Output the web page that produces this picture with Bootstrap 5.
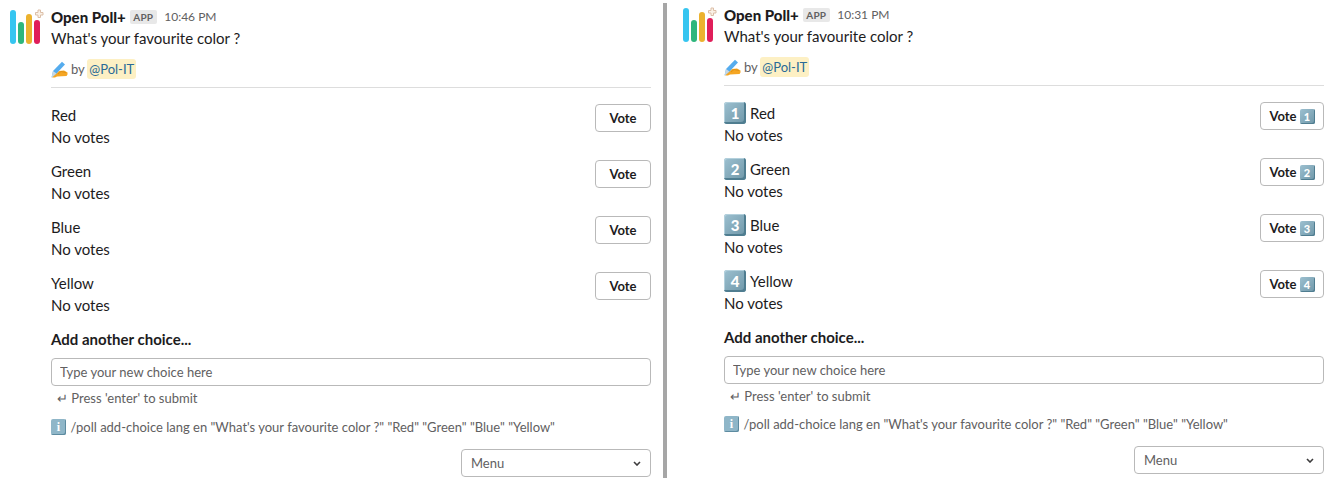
<!DOCTYPE html>
<html lang="en"><head><meta charset="utf-8"><title>Open Poll+</title>
<link href="https://cdn.jsdelivr.net/npm/bootstrap@5.3.0/dist/css/bootstrap.min.css" rel="stylesheet">
<style>
html,body{height:485px;overflow:hidden}
body{font-family:Lato,"Liberation Sans",sans-serif;color:#1d1c1d;font-size:15px;line-height:22px;background:#fff}
.pane{flex:none;display:flex;align-items:flex-start}
.pane-a{width:663px;padding:6px 12px 0 10px}
.pane-b{width:671px;padding:4px 14px 0 16px}
.rule{flex:none;width:4px;height:475px;margin-top:3px;background:#a6a6a6}
.logo{flex:none;width:34px;height:36px;margin-top:3px;margin-right:7px}
.body-col{width:600px}
.head{height:21px}
.who{font-weight:900;font-size:15px}
.tag{font-size:10px;font-weight:700;line-height:14px;height:14px;padding:0 3.5px;margin-left:4px;background:#e8e8e8;color:#616061;border-radius:2px;letter-spacing:.2px}
.when{font-size:12px;color:#616061;margin-left:7.5px}
.ctx{font-size:13px;line-height:18px;color:#616061;margin-top:10px;height:20px}
.pen{width:17px;height:17px;margin-right:3px}
.ment{background:#fdf0c4;color:#2a6a97;border-radius:3px;padding:1px 2px 1px 2.5px;margin-left:-1px}
.sep{height:1px;background:#dddddd;margin:8px 0 16px}
.opt{height:56px}
.lab{height:22px}
.key{display:inline-flex;align-items:center;justify-content:center;flex:none;width:22px;height:22px;border-radius:3px;background:linear-gradient(135deg,#9cc0d0,#6f97a8);box-shadow:inset -2px -2px 0 #4f7d90,inset 1px 1px 0 #b3d0dc;color:#fff;font-weight:900;font-size:15px;line-height:1;margin-right:4px}
.key-s{width:15px;height:15px;font-size:11px;margin:0 0 0 3px;border-radius:2px;box-shadow:inset -1px -1px 0 #4f7d90}
.votebtn{height:28px;padding:0 13.5px;font-size:13px;font-weight:700;line-height:26px;background:#fff;color:#1d1c1d;border:1px solid #b9b9b9;border-radius:4px}
.votebtn-b{padding:0 8.5px}
.addh{font-weight:700;font-size:15px;height:22px}
.fld{display:block;width:100%;height:28px;margin-top:8px;padding:0 8px;border:1px solid #b9b9b9;border-radius:4px;font-size:13px;color:#1d1c1d;font-family:inherit}
.fld::placeholder{color:#616061;opacity:1}
.hint{font-size:13px;line-height:18px;color:#616061;margin-top:3px;padding-left:6px}
.info{font-size:13px;line-height:18px;color:#616061;margin-top:11px}
.info-b{margin-top:10px}
.ikey{display:inline-flex;align-items:center;justify-content:center;flex:none;width:15px;height:16px;border-radius:2px;background:#8fb6c8;box-shadow:inset -1px -1px 0 #5d8ba0;color:#fff;font-weight:900;font-size:12px;margin-right:4.5px;font-family:"Liberation Serif",serif}
.menu-wrap{margin-top:13px}
.menubtn{width:190px;height:28px;padding:0 9px 0 9px;border:1px solid #b9b9b9;border-radius:4px;background:#fff;font-size:13px;color:#616061;line-height:26px}
.chev{width:8px;height:5px}
</style></head><body>
<svg width="0" height="0" class="position-absolute"><defs>
<symbol id="lg" viewBox="0 0 34 36"><rect x="0" y="1" width="6" height="34" rx="3" fill="#36c5f0"/><rect x="8" y="13" width="6" height="22" rx="3" fill="#2eb67d"/><rect x="16" y="5" width="6" height="30" rx="3" fill="#ecb22e"/><rect x="24" y="11" width="6" height="24" rx="3" fill="#e01e5a"/><path d="M28 1h2.500v2.500H33V6h-2.500v2.500H28V6h-2.500V3.500H28z" fill="#faf1e6" stroke="#dcbfa8" stroke-width="1"/></symbol>
<symbol id="pn" viewBox="0 0 17 17"><path d="M1 16.500h3l2-1 9.500-.5 1-1.500v-2l-3.500-2-5 .5-3 2.500z" fill="#f5a623"/><path d="M.5 16.500L2 10 11 .8l3 2.700-8.500 9z" fill="#55acee"/><path d="M.5 16.500L2 10l3.500 2.500z" fill="#c7d8e4"/><path d="M7 13l3-2.500 5 1" fill="none" stroke="#d98b12" stroke-width=".8"/></symbol>
</defs></svg>
<div class="d-flex">
<div class="pane pane-a">
<svg class="logo"><use href="#lg"/></svg>
<div class="body-col">
<div class="head d-flex align-items-center"><span class="who">Open Poll+</span><span class="tag">APP</span><span class="when">10:46 PM</span></div>
<div>What's your favourite color ?</div>
<div class="ctx d-flex align-items-center"><svg class="pen"><use href="#pn"/></svg><span>by&nbsp;</span><span class="ment">@Pol-IT</span></div>
<div class="sep"></div>
<div class="opt d-flex justify-content-between"><div><div class="lab">Red</div><div>No votes</div></div><button class="votebtn">Vote</button></div>
<div class="opt d-flex justify-content-between"><div><div class="lab">Green</div><div>No votes</div></div><button class="votebtn">Vote</button></div>
<div class="opt d-flex justify-content-between"><div><div class="lab">Blue</div><div>No votes</div></div><button class="votebtn">Vote</button></div>
<div class="opt d-flex justify-content-between"><div><div class="lab">Yellow</div><div>No votes</div></div><button class="votebtn">Vote</button></div>
<div class="addh">Add another choice...</div>
<input class="fld" placeholder="Type your new choice here">
<div class="hint">↵ Press 'enter' to submit</div>
<div class="info d-flex align-items-center"><span class="ikey">i</span><span>/poll add-choice lang en "What's your favourite color ?" "Red" "Green" "Blue" "Yellow"</span></div>
<div class="menu-wrap d-flex justify-content-end"><div class="menubtn d-flex justify-content-between align-items-center"><span>Menu</span><svg class="chev" viewBox="0 0 8 5"><path d="M1 1l3 3 3-3" fill="none" stroke="#3d3c3d" stroke-width="1.600"/></svg></div></div>
</div>
</div>
<div class="rule"></div>
<div class="pane pane-b">
<svg class="logo"><use href="#lg"/></svg>
<div class="body-col">
<div class="head d-flex align-items-center"><span class="who">Open Poll+</span><span class="tag">APP</span><span class="when">10:31 PM</span></div>
<div>What's your favourite color ?</div>
<div class="ctx d-flex align-items-center"><svg class="pen"><use href="#pn"/></svg><span>by&nbsp;</span><span class="ment">@Pol-IT</span></div>
<div class="sep"></div>
<div class="opt d-flex justify-content-between"><div><div class="lab d-flex align-items-center"><span class="key">1</span>Red</div><div>No votes</div></div><button class="votebtn votebtn-b">Vote<span class="key key-s">1</span></button></div>
<div class="opt d-flex justify-content-between"><div><div class="lab d-flex align-items-center"><span class="key">2</span>Green</div><div>No votes</div></div><button class="votebtn votebtn-b">Vote<span class="key key-s">2</span></button></div>
<div class="opt d-flex justify-content-between"><div><div class="lab d-flex align-items-center"><span class="key">3</span>Blue</div><div>No votes</div></div><button class="votebtn votebtn-b">Vote<span class="key key-s">3</span></button></div>
<div class="opt d-flex justify-content-between"><div><div class="lab d-flex align-items-center"><span class="key">4</span>Yellow</div><div>No votes</div></div><button class="votebtn votebtn-b">Vote<span class="key key-s">4</span></button></div>
<div class="addh">Add another choice...</div>
<input class="fld" placeholder="Type your new choice here">
<div class="hint">↵ Press 'enter' to submit</div>
<div class="info info-b d-flex align-items-center"><span class="ikey">i</span><span>/poll add-choice lang en "What's your favourite color ?" "Red" "Green" "Blue" "Yellow"</span></div>
<div class="menu-wrap d-flex justify-content-end"><div class="menubtn d-flex justify-content-between align-items-center"><span>Menu</span><svg class="chev" viewBox="0 0 8 5"><path d="M1 1l3 3 3-3" fill="none" stroke="#3d3c3d" stroke-width="1.600"/></svg></div></div>
</div>
</div>
</div>
<script src="https://cdn.jsdelivr.net/npm/bootstrap@5.3.0/dist/js/bootstrap.bundle.min.js"></script>
</body></html>
